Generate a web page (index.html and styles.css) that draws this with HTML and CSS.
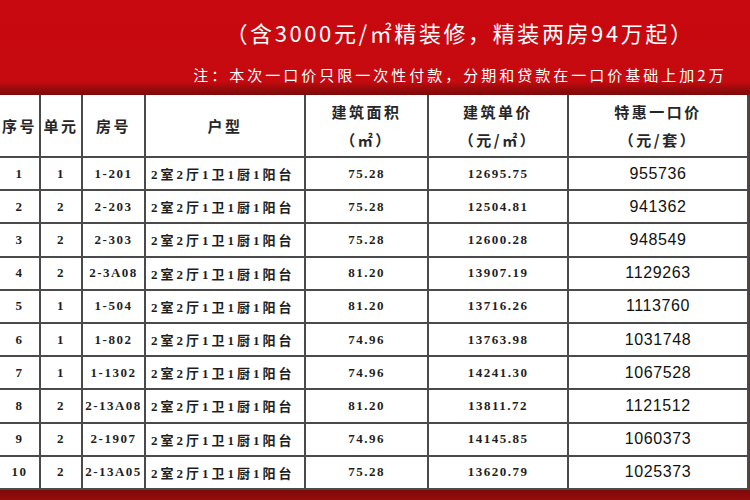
FILE: index.html
```html
<!DOCTYPE html>
<html lang="zh">
<head>
<meta charset="utf-8">
<link rel="stylesheet" href="styles.css">
</head>
<body>
<div class="page">
  <header class="banner">
    <p class="headline">（含3000元/㎡精装修，精装两房94万起）</p>
    <p class="note">注：本次一口价只限一次性付款，分期和贷款在一口价基础上加2万</p>
  </header>
  <div class="table-wrap">
    <table class="prices">
      <colgroup>
        <col class="c1"><col class="c2"><col class="c3"><col class="c4"><col class="c5"><col class="c6"><col class="c7">
      </colgroup>
      <thead>
        <tr>
          <th>序号</th><th>单元</th><th>房号</th><th>户型</th>
          <th>建筑面积<br>（㎡）</th>
          <th>建筑单价<br>（元/㎡）</th>
          <th>特惠一口价<br>（元/套）</th>
        </tr>
      </thead>
      <tbody>
        <tr><td>1</td><td>1</td><td>1-201</td><td class="type">2室2厅1卫1厨1阳台</td><td>75.28</td><td>12695.75</td><td class="total">955736</td></tr>
        <tr><td>2</td><td>2</td><td>2-203</td><td class="type">2室2厅1卫1厨1阳台</td><td>75.28</td><td>12504.81</td><td class="total">941362</td></tr>
        <tr><td>3</td><td>2</td><td>2-303</td><td class="type">2室2厅1卫1厨1阳台</td><td>75.28</td><td>12600.28</td><td class="total">948549</td></tr>
        <tr><td>4</td><td>2</td><td>2-3A08</td><td class="type">2室2厅1卫1厨1阳台</td><td>81.20</td><td>13907.19</td><td class="total">1129263</td></tr>
        <tr><td>5</td><td>1</td><td>1-504</td><td class="type">2室2厅1卫1厨1阳台</td><td>81.20</td><td>13716.26</td><td class="total">1113760</td></tr>
        <tr><td>6</td><td>1</td><td>1-802</td><td class="type">2室2厅1卫1厨1阳台</td><td>74.96</td><td>13763.98</td><td class="total">1031748</td></tr>
        <tr><td>7</td><td>1</td><td>1-1302</td><td class="type">2室2厅1卫1厨1阳台</td><td>74.96</td><td>14241.30</td><td class="total">1067528</td></tr>
        <tr><td>8</td><td>2</td><td>2-13A08</td><td class="type">2室2厅1卫1厨1阳台</td><td>81.20</td><td>13811.72</td><td class="total">1121512</td></tr>
        <tr><td>9</td><td>2</td><td>2-1907</td><td class="type">2室2厅1卫1厨1阳台</td><td>74.96</td><td>14145.85</td><td class="total">1060373</td></tr>
        <tr><td>10</td><td>2</td><td>2-13A05</td><td class="type">2室2厅1卫1厨1阳台</td><td>75.28</td><td>13620.79</td><td class="total">1025373</td></tr>
      </tbody>
    </table>
  </div>
  <footer class="foot"></footer>
</div>
</body>
</html>
```

FILE: styles.css
```css
html, body {
  margin: 0;
  padding: 0;
  background: #b90a0d;
}
.page {
  width: 750px;
  height: 500px;
  overflow: hidden;
  display: flex;
  flex-direction: column;
}
.banner {
  height: 95px;
  box-sizing: border-box;
  background: linear-gradient(180deg, #c8090f 0%, #c60a10 86%, #9a0a0c 93%, #7e0a0a 100%);
  display: flex;
  flex-direction: column;
  align-items: center;
  padding: 17px 0 0 170px;
  color: #fff;
  font-family: "Noto Sans CJK SC", "Noto Sans", sans-serif;
}
.headline {
  margin: 0;
  font-size: 22px;
  line-height: 30px;
  letter-spacing: 2.6px;
  font-weight: 400;
}
.note {
  margin: 18px 0 0 0;
  font-size: 15px;
  line-height: 20px;
  letter-spacing: 3px;
}
.table-wrap {
  display: flex;
  padding-right: 2px;
  background: #c20b10;
}
.prices {
  width: 748px;
  table-layout: fixed;
  border-collapse: collapse;
  background: #fff;
  color: #1e1e1e;
}
.c1 { width: 40px; }
.c2 { width: 42px; }
.c3 { width: 63px; }
.c4 { width: 160px; }
.c5 { width: 123px; }
.c6 { width: 140px; }
.c7 { width: 180px; }
.prices th, .prices td {
  border: 2px solid #4a4a4a;
  padding: 0;
  text-align: center;
  white-space: nowrap;
  overflow: hidden;
}
.prices tr:first-child th { border-top: 0; }
.prices th:first-child, .prices td:first-child { border-left: 0; }
.prices th {
  height: 61px;
  font-family: "Noto Sans CJK SC", sans-serif;
  font-size: 15px;
  font-weight: 700;
  line-height: 28px;
  letter-spacing: 2.5px;
  color: #262626;
}
.prices td {
  height: 31.2px;
  font-family: "Liberation Serif", "Noto Sans CJK SC", serif;
  font-size: 13px;
  font-weight: 700;
  letter-spacing: 1.5px;
}
.prices td.type {
  font-size: 13px;
  letter-spacing: 3px;
  text-align: left;
  padding-left: 5px;
}
.prices td.total {
  font-family: "Liberation Sans", sans-serif;
  font-size: 16px;
  font-weight: 400;
  letter-spacing: 0.6px;
  color: #111;
}
.foot {
  flex: 1;
  background: linear-gradient(180deg, #7d0a0a 0%, #960c0c 100%);
}
```
